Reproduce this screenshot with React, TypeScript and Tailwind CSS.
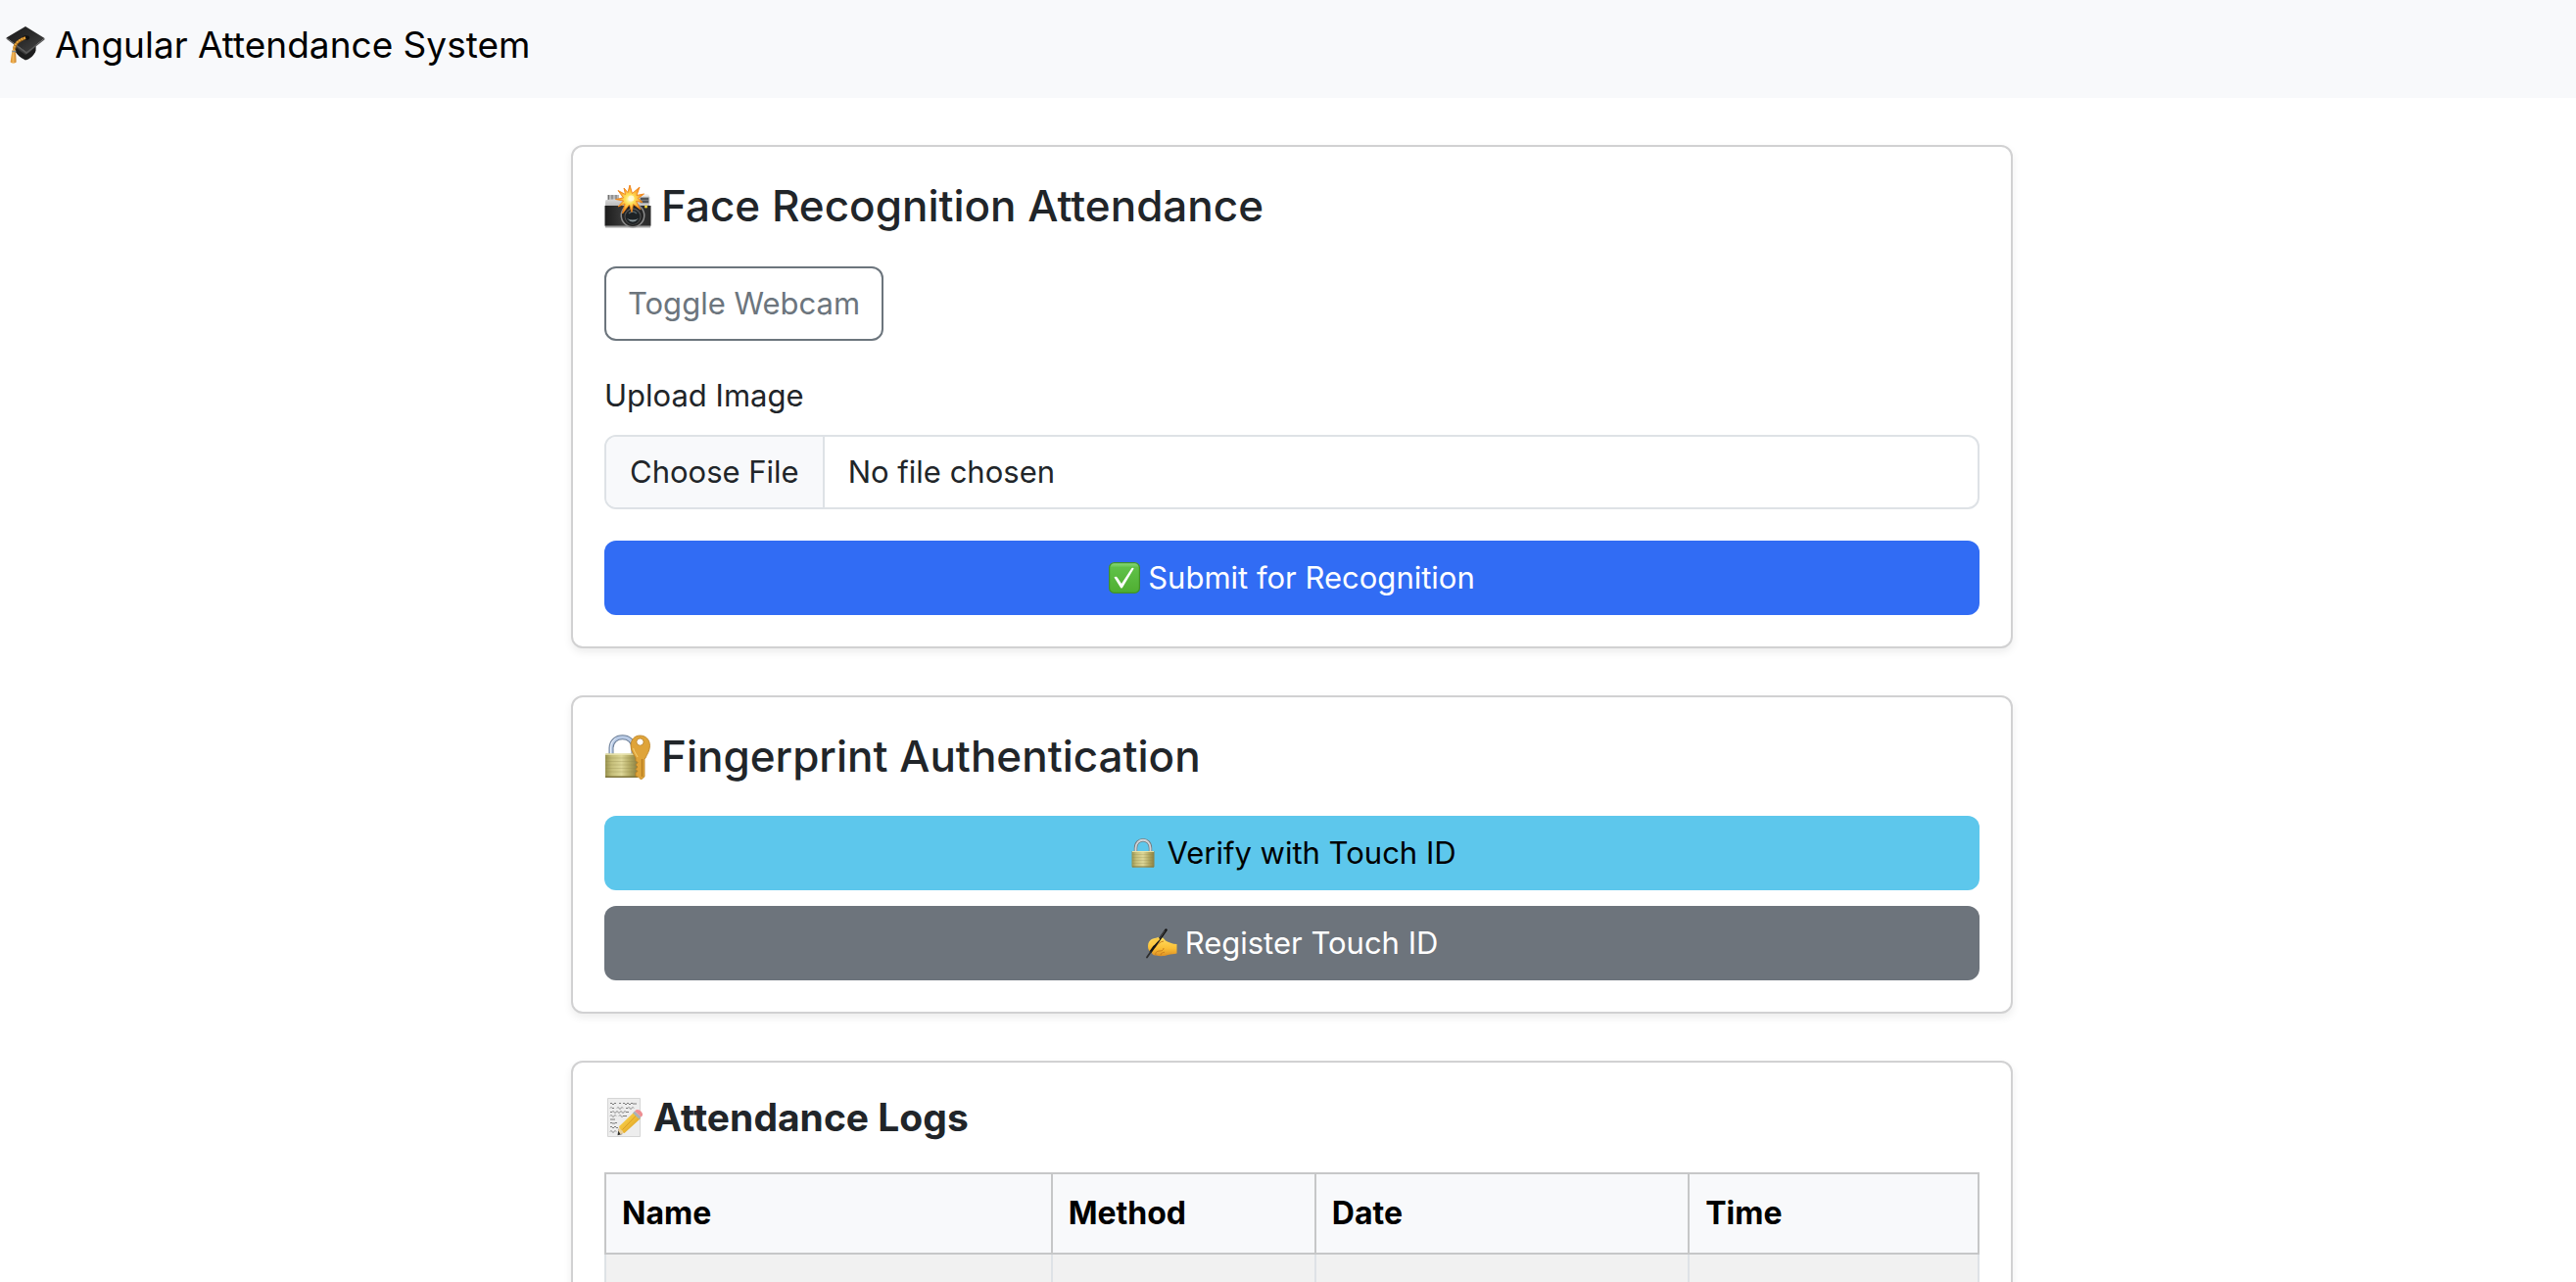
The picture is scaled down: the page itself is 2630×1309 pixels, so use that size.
import type { ReactNode } from "react";

function GraduationCap() {
  return (
    <svg viewBox="0 0 40 40" className="size-10 shrink-0" aria-hidden="true">
      <defs>
        <linearGradient id="board" x1="0" y1="0" x2="1" y2="1">
          <stop offset="0" stopColor="#1b1b1b" />
          <stop offset="0.5" stopColor="#2b2b2b" />
          <stop offset="1" stopColor="#484848" />
        </linearGradient>
        <linearGradient id="tassel" x1="0" y1="0" x2="1" y2="0">
          <stop offset="0" stopColor="#d98d2b" />
          <stop offset="0.5" stopColor="#f2b75a" />
          <stop offset="1" stopColor="#c67c22" />
        </linearGradient>
      </defs>
      <path d="M10 20v7c2 3 5 6 10 8.500c4-1 8-4 10-8.500l.5-8-10.500 8z" fill="#3a3a3a" />
      <path d="M10 22c3 3 7 6 10 8 4-2 8-6 10.500-9v5c-2 4-6 8-10.500 9-5-2-8-5-10-8z" fill="#1d1d1d" />
      <path d="M20 1 39.500 13 21 27.500.5 12.500z" fill="url(#board)" />
      <path d="M.5 12.500 21 27l18.500-14v1.500L21 29 .5 13.800z" fill="#5a5a5a" />
      <ellipse cx="20.500" cy="12.500" rx="3.600" ry="2.300" fill="#101010" />
      <path d="M20 12.500C14 15 8.500 18 8.500 25" fill="none" stroke="#8f5b17" strokeWidth="3" />
      <path d="M20 12.500C14 14.500 8 18 8 26" fill="none" stroke="#e9a63e" strokeWidth="2" strokeDasharray="2.200 .6" />
      <path d="M6.500 25h3.500l.6 12.500c-1.500 1.500-4.500 1.500-6 0z" fill="url(#tassel)" />
      <path d="M6.300 26.500h4" stroke="#7d8b90" strokeWidth="1.500" />
    </svg>
  );
}

function FlashCamera() {
  return (
    <svg viewBox="0 0 48 48" className="size-12 shrink-0" aria-hidden="true">
      <defs>
        <linearGradient id="chrome" x1="0" y1="0" x2="0" y2="1">
          <stop offset="0" stopColor="#f3f3f3" />
          <stop offset="1" stopColor="#b5b5b5" />
        </linearGradient>
        <linearGradient id="leather" x1="0" y1="0" x2="1" y2="0">
          <stop offset="0" stopColor="#1c1c1c" />
          <stop offset="0.4" stopColor="#3a3a3a" />
          <stop offset="1" stopColor="#2a2a2a" />
        </linearGradient>
        <radialGradient id="flash">
          <stop offset="0" stopColor="#fffde0" />
          <stop offset="0.3" stopColor="#ffe45c" />
          <stop offset="0.9" stopColor="#f78f1e" />
        </radialGradient>
      </defs>
      <path d="M3 12h12v5H3z" fill="#b9b9b9" />
      <path d="M4.500 12v5M8 12v5M12 12v5" stroke="#6f6f6f" />
      <path d="M2 17 16 16 19 11h24q3 0 3 3v10H1v-5q0-2 1-2z" fill="url(#chrome)" />
      <path d="M.5 23h47v20q0 2-2 2h-43q-2 0-2-2z" fill="url(#leather)" />
      <path d="M1 43.500h46v2H1z" fill="#a3a3a3" />
      <path d="M36 14h10v7H36z" fill="#777b80" stroke="#d3d3d3" />
      <path d="M37 16h8M37 19h8" stroke="#333" />
      <circle cx="42.500" cy="24" r="1.500" fill="#f5d736" />
      <circle cx="29" cy="33" r="12.500" fill="#8d8d8d" />
      <circle cx="29" cy="33" r="11" fill="#252525" />
      <circle cx="29" cy="34" r="8.500" fill="#555" />
      <circle cx="29" cy="34.500" r="7.500" fill="#1d2225" />
      <path d="M23 36q6 7 12 0-6 3-12 0" fill="#8b979b" />
      <path d="M25 31q4-4 8 0" fill="none" stroke="#536066" strokeWidth="1.500" />
      <path d="m26 2 2.500 8.500L36 4l-3 8.500 7.500-1.500-6 4.500 4.500 4-6.500-1L37 27l-7.500-5.500-1.500 8-2.500-7.500-7 9 2.500-10-7 3 5.500-6-8-1.500 8-1.500-5.500-7.500 7.500 4-1.500-6.500 4 4.500z" fill="url(#flash)" stroke="#ee8319" strokeWidth=".9" />
      <circle cx="27.500" cy="15.500" r="3" fill="#fffbe0" opacity=".8" />
    </svg>
  );
}

function BrassGradient({ id }: { id: string }) {
  return (
    <linearGradient id={id} x1="0" y1="0" x2="1" y2="0">
      <stop offset="0" stopColor="#99934f" />
      <stop offset="0.2" stopColor="#c5be79" />
      <stop offset="0.5" stopColor="#dcd697" />
      <stop offset="0.8" stopColor="#aca25b" />
      <stop offset="1" stopColor="#8a7f42" />
    </linearGradient>
  );
}

function LockWithKey() {
  return (
    <svg viewBox="0 0 48 48" className="size-12 shrink-0" aria-hidden="true">
      <defs>
        <BrassGradient id="brassKey" />
      </defs>
      <path d="M7 23v-7c0-15 23-15 23 0v7" fill="none" stroke="#6d7f98" strokeWidth="5" />
      <path d="M7 23v-7c0-15 23-15 23 0v7" fill="none" stroke="#b9cbe6" strokeWidth="3" />
      <path d="M6.500 22v-6c0-5 2-8 5-10" fill="none" stroke="#eef4fc" strokeWidth="1" />
      <rect x="1" y="21.500" width="33" height="24.500" rx="1" fill="url(#brassKey)" />
      <path d="M1 26h33M1 29.500h33M1 33h33M1 36.500h33M1 40h33" stroke="#8e854a" strokeWidth=".6" opacity=".45" />
      <path d="M1 22.200h33" stroke="#eee9b6" strokeWidth="1.200" />
      <path d="M1 45.200h33" stroke="#7d733a" strokeWidth="1.600" />
      <path fillRule="evenodd" d="M36.500 3c6 0 10 4.500 10 10.500 0 5-3 9-4.500 12.500l-1 1v18l-3.500 3-2.500-2.500-3-1v-3.500l2-1.500-2-2 2-2.500-2-2 2-2.500-2-2V26c-2-3.500-5-7.500-5-12.500C27 7.500 30.500 3 36.500 3zm0 3a3.600 3.600 0 1 0 0 7.200 3.600 3.600 0 1 0 0-7.200z" fill="#dfa43a" stroke="#b97f22" strokeWidth=".8" />
      <path d="M38.500 27v18" stroke="#b57b20" strokeWidth="1.300" />
      <path d="M29.500 16c1 4 3 6 4.500 9" fill="none" stroke="#f3c868" strokeWidth="1.200" />
    </svg>
  );
}

function Padlock() {
  return (
    <svg viewBox="0 0 32 32" className="size-8 shrink-0" aria-hidden="true">
      <defs>
        <BrassGradient id="brassLock" />
      </defs>
      <path d="M8.500 15v-4c0-11 15-11 15 0v4" fill="none" stroke="#75797c" strokeWidth="3.400" />
      <path d="M8.500 15v-4c0-11 15-11 15 0v4" fill="none" stroke="#d0d5da" strokeWidth="1.900" />
      <rect x="4.500" y="14" width="23" height="16.500" rx=".8" fill="url(#brassLock)" />
      <path d="M5 17.500h22M5 20.500h22M5 23.500h22M5 26.500h22" stroke="#8e854a" strokeWidth=".5" opacity=".45" />
      <path d="M5 14.500h22" stroke="#ece6ac" strokeWidth=".9" />
      <path d="M5 30h22" stroke="#80763c" strokeWidth="1" />
    </svg>
  );
}

function WritingHand() {
  return (
    <svg viewBox="0 0 32 32" className="size-8 shrink-0" aria-hidden="true">
      <defs>
        <linearGradient id="skin" x1="0" y1="0" x2="0" y2="1">
          <stop offset="0" stopColor="#ffdf62" />
          <stop offset="0.6" stopColor="#fbbf35" />
          <stop offset="1" stopColor="#dd8f24" />
        </linearGradient>
      </defs>
      <path d="M2 19c0-4 2-6.500 5-7.500l6-1.500c3-1 5 1 7 3.500 3 1.500 7 3.500 11.500 3.500v9.500c-3 1-6 .5-9 1.500-4 1.500-9 1.500-12 .5-3.500 0-4.500-1.500-4.500-3C3 24.500 2 22 2 19z" fill="url(#skin)" />
      <path d="M18 14c-4 .5-6.500 3.500-9 7M10 28c-1-2 1-4 4-4 2.500 0 4-1 4-3M15 28.300c0-2 2-3 4-3" fill="none" stroke="#c67a1c" strokeWidth=".9" />
      <path d="M20.500 2.500 5 24.500" stroke="#151515" strokeWidth="2.600" strokeLinecap="round" />
      <path d="M4.800 25 1 30.500" stroke="#2c2c2c" strokeWidth="1.800" strokeLinecap="round" />
      <path d="m19.500 3.200-6 8.500" stroke="#666" strokeWidth=".7" />
      <path d="M5 15.500c1-2.500 3.500-4 7-4.800 2.500-.2 2.500 2 .5 3L9 17.500c-1.500 2-5 .5-4-2z" fill="#fdcb45" />
    </svg>
  );
}

function Memo() {
  return (
    <svg viewBox="0 0 40 40" className="size-10 shrink-0" aria-hidden="true">
      <defs>
        <linearGradient id="pencil" x1="0" y1="0" x2="1" y2="1">
          <stop offset="0" stopColor="#f9df63" />
          <stop offset="0.5" stopColor="#f0bd37" />
          <stop offset="1" stopColor="#c88a1f" />
        </linearGradient>
      </defs>
      <path d="M3.500.5h33v39h-33z" fill="#ededed" stroke="#d5d5d5" />
      <path
        d="M6 6q1-2 2 0t2 0 2 0M15 5.500h2m2 .5q1-2 2 0t2 0 2 0 2 0 2 0h4M6 10.500q1-2 2 0h2m3 0q1-2 2 0t2 0 2 0m3 0h2q1-2 2 0t2 0 2 0M6 14.500h2q1-2 2 0t2 0 2 0 2 0 2 0 2 0 2 0h3M6 18.500q1-2 2 0t2 0 2 0m3 0q1-2 2 0t2 0h4M6 22h5M6 26q1-2 2 0h3q1-2 2 0M6 30q1-2 2 0t2 0 2 0 2 0M6 34.500q1-2 2 0t2 0 2 0"
        fill="none"
        stroke="#707070"
        strokeWidth=".9"
      />
      <path d="m14.500 31.500 4 5.500-5 1.200z" fill="#30302c" />
      <path d="m16 28 5 7.500-4.500 1.700-2.500-4z" fill="#e9cf9d" />
      <path d="M30.500 14.500 37 21 20.500 36q-1.500-.5-2-2.500-2-.5-2.500-2.500-1-.5-.8-2z" fill="url(#pencil)" />
      <path d="M33 17.500 18.500 32.500" stroke="#d99c26" strokeWidth="1" />
      <path d="m29 15.500 2-2 6.500 6-2 2.200z" fill="#a9b2b6" />
      <path d="m31 13.500 1.500-1.300q3-.8 5 1.500 2 2 1.500 4.300l-1.500 1.500z" fill="#ee8f93" />
    </svg>
  );
}

function CheckMark() {
  return (
    <svg viewBox="0 0 32 32" className="size-8 shrink-0" aria-hidden="true">
      <defs>
        <linearGradient id="tile" x1="0" y1="0" x2="0" y2="1">
          <stop offset="0" stopColor="#8fdc80" />
          <stop offset="0.16" stopColor="#5fc148" />
          <stop offset="1" stopColor="#4fae31" />
        </linearGradient>
      </defs>
      <rect x=".6" y=".6" width="30.800" height="30.800" rx="5" fill="url(#tile)" stroke="#3f8f2c" strokeWidth="1.200" />
      <path d="M5.500 15.500q2-1.500 3.500.5l4 6L23.500 6q2.300-.8 2 .8L14 26q-1 1.200-2 0z" fill="#fff" />
    </svg>
  );
}

function Card({ children }: { children: ReactNode }) {
  return (
    <section className="rounded-xl border-2 border-[#d1d1d2] bg-white p-8 shadow-[0_4px_8px_rgba(0,0,0,0.075)]">
      {children}
    </section>
  );
}

function CardTitle({ icon, children }: { icon: ReactNode; children: ReactNode }) {
  return (
    <h2 className="mb-8 flex items-center gap-2.5 text-[44px] leading-[1.31] font-medium">
      {icon}
      {children}
    </h2>
  );
}

const wideButton = "flex h-[76px] w-full items-center justify-center gap-2 rounded-xl";

const columns = [
  { name: "Name", width: "w-[32.5%]" },
  { name: "Method", width: "w-[19.2%]" },
  { name: "Date", width: "w-[27.2%]" },
  { name: "Time", width: "w-[21.1%]" },
];

export default function App() {
  return (
    <div className="h-screen overflow-hidden bg-white font-['Inter',sans-serif] text-[31px] leading-[48px] text-[#212529]">
      <header className="bg-[#f8f9fb] pt-4 pr-4 pb-6 pl-1.5">
        <h1 className="flex h-15 items-center gap-2.5 text-[37px] leading-[60px] text-black">
          <GraduationCap />
          Angular Attendance System
        </h1>
      </header>

      <main className="pt-12 pl-2">
        <div className="mx-auto flex max-w-[1472px] flex-col gap-12">
          <Card>
            <CardTitle icon={<FlashCamera />}>Face Recognition Attendance</CardTitle>
            <button type="button" className="mb-8 block h-[76px] w-[285px] rounded-xl border-2 border-[#6c757d] text-[#6c757d]">
              Toggle Webcam
            </button>
            <label htmlFor="image" className="mb-4 block">
              Upload Image
            </label>
            <input
              id="image"
              type="file"
              className="mb-8 block h-[76px] w-full rounded-xl border-2 border-[#dee2e6] file:mr-6 file:h-[72px] file:border-r-2 file:border-[#dee2e6] file:bg-[#f8f9fb] file:px-6"
            />
            <button type="button" className={`${wideButton} bg-[#316cf4] text-white`}>
              <CheckMark />
              Submit for Recognition
            </button>
          </Card>

          <Card>
            <CardTitle icon={<LockWithKey />}>Fingerprint Authentication</CardTitle>
            <div className="flex flex-col gap-4">
              <button type="button" className={`${wideButton} bg-[#5dc7ec] text-black`}>
                <Padlock />
                Verify with Touch ID
              </button>
              <button type="button" className={`${wideButton} bg-[#6d747c] text-white`}>
                <WritingHand />
                Register Touch ID
              </button>
            </div>
          </Card>

          <Card>
            <h3 className="mb-8 flex items-center gap-2.5 text-[39px] leading-[48px] font-bold">
              <Memo />
              Attendance Logs
            </h3>
            <table className="w-full table-fixed border-collapse text-left">
              <thead className="bg-[#f8f9fb] text-[32px] text-black">
                <tr>
                  {columns.map((column) => (
                    <th key={column.name} scope="col" className={`${column.width} border-2 border-[#c6c7c8] p-4 font-bold`}>
                      {column.name}
                    </th>
                  ))}
                </tr>
              </thead>
              <tbody>
                <tr className="h-20 bg-[#f1f1f1]">
                  {columns.map((column) => (
                    <td key={column.name} className="border-2 border-[#dee2e6] p-4" />
                  ))}
                </tr>
              </tbody>
            </table>
          </Card>
        </div>
      </main>
    </div>
  );
}
